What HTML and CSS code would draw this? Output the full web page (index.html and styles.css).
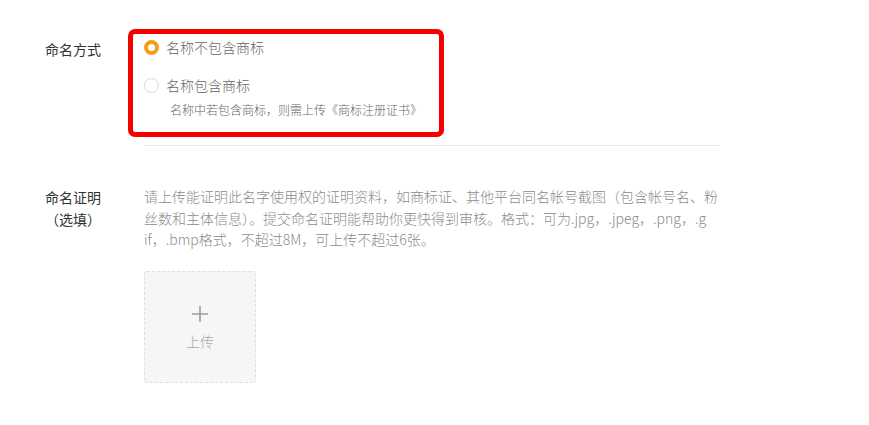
FILE: index.html
```html
<!DOCTYPE html>
<html lang="zh-CN">
<head>
<meta charset="utf-8">
<title>命名</title>
<link rel="stylesheet" href="styles.css">
</head>
<body>
<div class="form">
  <div class="row row-naming">
    <div class="label">命名方式</div>
    <div class="content">
      <div class="radio-group">
        <div class="highlight"></div>
        <label class="radio checked"><span class="dot"></span><span class="radio-text">名称不包含商标</span></label>
        <label class="radio"><span class="dot"></span><span class="radio-text">名称包含商标</span></label>
        <div class="hint">名称中若包含商标，则需上传《商标注册证书》</div>
      </div>
      <div class="divider"></div>
    </div>
  </div>
  <div class="row row-proof">
    <div class="label">命名证明<br>（选填）</div>
    <div class="content">
      <p class="desc">请上传能证明此名字使用权的证明资料，如商标证、其他平台同名帐号截图（包含帐号名、粉<br>丝数和主体信息）。提交命名证明能帮助你更快得到审核。格式：可为.jpg，.jpeg，.png，.g<br>if，.bmp格式，不超过8M，可上传不超过6张。</p>
      <div class="upload">
        <svg class="plus" width="18" height="18" viewBox="0 0 18 18"><path d="M9 1v16M1 9h16" stroke="#9a9a9a" stroke-width="1.6" fill="none"/></svg>
        <span class="upload-text">上传</span>
      </div>
    </div>
  </div>
</div>
</body>
</html>
```
FILE: styles.css
```css
html, body {
  margin: 0;
  padding: 0;
  background: #fff;
}
body {
  font-family: "Noto Sans CJK SC", "Noto Sans", sans-serif;
  font-size: 14px;
  color: #333;
  width: 869px;
  height: 425px;
  overflow: hidden;
}
.form {
  padding: 37px 0 0 45px;
}
.row {
  display: flex;
  gap: 43px;
}
.label {
  width: 56px;
  flex: none;
  text-align: right;
  font-size: 14px;
  color: #333;
  line-height: 22px;
}
.row-naming .label {
  padding-top: 1px;
}
.content {
  width: 576px;
}
.radio-group {
  position: relative;
  display: flex;
  flex-direction: column;
}
.highlight {
  position: absolute;
  left: -16px;
  top: -8px;
  width: 306px;
  height: 98px;
  border: 5px solid #f30000;
  border-radius: 7px;
  pointer-events: none;
}
.radio {
  display: flex;
  align-items: center;
  height: 20px;
  color: #666;
  font-size: 14px;
  font-weight: 300;
}
.radio + .radio {
  margin-top: 18px;
}
.dot {
  box-sizing: border-box;
  width: 15px;
  height: 15px;
  border-radius: 50%;
  border: 1px solid #d9d9d9;
  background: #fff;
  margin-right: 7px;
  flex: none;
}
.radio.checked .dot {
  border: 4.5px solid #f79c1a;
}
.hint {
  margin-top: 6px;
  padding-left: 26px;
  font-size: 12px;
  line-height: 18px;
  color: #666;
  font-weight: 300;
}
.divider {
  margin-top: 26px;
  height: 1px;
  background: #e8e8e8;
}
.row-proof {
  margin-top: 40px;
}
.desc {
  margin: 0;
  font-size: 14px;
  line-height: 21.5px;
  color: #8c8c8c;
  white-space: nowrap;
  font-weight: 300;
}
.upload {
  margin-top: 20px;
  box-sizing: border-box;
  width: 112px;
  height: 112px;
  border: 1px dashed #e0e0e0;
  border-radius: 3px;
  background: #f6f6f6;
  display: flex;
  flex-direction: column;
  align-items: center;
  padding-top: 33px;
}
.upload-text {
  margin-top: 8px;
  font-size: 14px;
  line-height: 20px;
  color: #aaa;
  font-weight: 300;
}
```
